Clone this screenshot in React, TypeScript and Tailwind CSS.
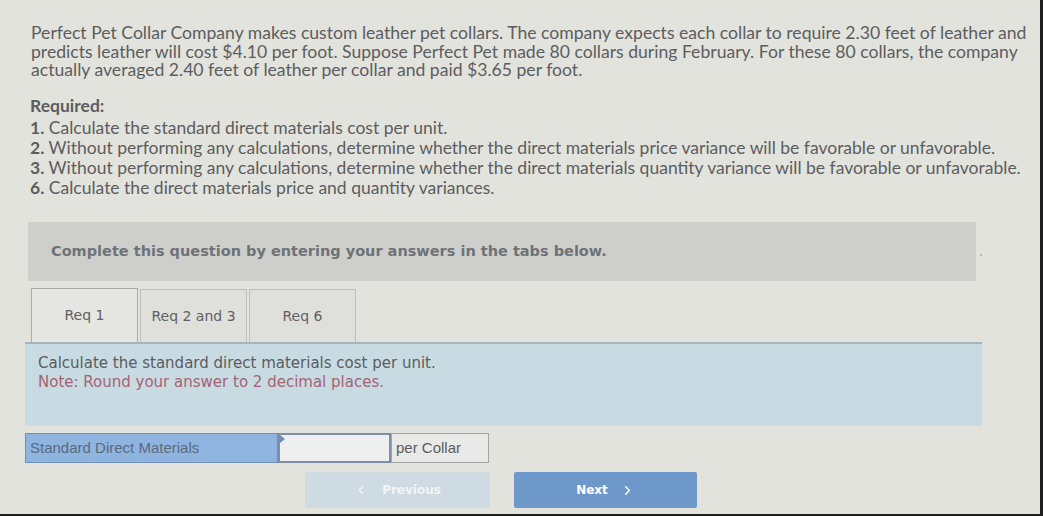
import { ChevronLeft, ChevronRight } from "lucide-react";

const TABS = ["Req 1", "Req 2 and 3", "Req 6"];

const INTRO = [
  "Perfect Pet Collar Company makes custom leather pet collars. The company expects each collar to require 2.30 feet of leather and",
  "predicts leather will cost $4.10 per foot. Suppose Perfect Pet made 80 collars during February. For these 80 collars, the company",
  "actually averaged 2.40 feet of leather per collar and paid $3.65 per foot."
];

const REQUIRED: Array<{ num: string; text: string }> = [
  { num: "1.", text: "Calculate the standard direct materials cost per unit." },
  {
    num: "2.",
    text: "Without performing any calculations, determine whether the direct materials price variance will be favorable or unfavorable."
  },
  {
    num: "3.",
    text: "Without performing any calculations, determine whether the direct materials quantity variance will be favorable or unfavorable."
  },
  { num: "6.", text: "Calculate the direct materials price and quantity variances." }
];

export default function App() {
  return (
    <div className="flex h-[516px] w-[1043px] overflow-hidden bg-[#1f1f1f]">
      <div className="relative flex h-[514px] w-[1040px] flex-col bg-[#e3e3de]">
        <div className="pl-[31px] pr-[4px] pt-[24px] font-['Lato',sans-serif] text-[17.6px] leading-[18.5px] text-[#5c5d5e]">
          {INTRO.map((line) => (
            <div key={line} className="h-[18.5px] whitespace-nowrap">
              {line}
            </div>
          ))}
        </div>

        <div className="mt-[16px] pl-[30px] font-['Lato',sans-serif] text-[17.5px] leading-[19.8px] text-[#5c5d5e]">
          <div className="pb-[3px] font-bold">Required:</div>
          {REQUIRED.map((item) => (
            <div key={item.num} className="whitespace-nowrap">
              <span className="font-bold">{item.num}</span> {item.text}
            </div>
          ))}
        </div>

        <div className="ml-[28px] mt-[25px] flex h-[59px] w-[948px] items-center bg-[#cecfcb] pl-[23px]">
          <span className="font-['DejaVu_Sans',sans-serif] text-[14.5px] font-bold text-[#6d7379]">
            Complete this question by entering your answers in the tabs below.
          </span>
        </div>

        <div className="ml-[31px] mt-[7px] flex items-end gap-[2px]">
          {TABS.map((tab, i) => (
            <div
              key={tab}
              className={
                i === 0
                  ? "flex h-[54px] w-[107px] items-center justify-center border border-b-0 border-[#a9aaa7] bg-[#e6e6e2] font-['DejaVu_Sans',sans-serif] text-[14px] text-[#5f6062]"
                  : "flex h-[53px] w-[107px] items-center justify-center border border-b-0 border-[#bdbebb] bg-[#dfe0dc] font-['DejaVu_Sans',sans-serif] text-[14px] text-[#5f6062]"
              }
            >
              {tab}
            </div>
          ))}
        </div>

        <div className="ml-[25px] h-[84px] w-[957px] border-t-2 border-[#a9b4ba] bg-[#c9dbe2] pl-[13px] pt-[10px] font-['DejaVu_Sans',sans-serif] text-[15px] leading-[19px]">
          <div className="text-[#5a5c61]">Calculate the standard direct materials cost per unit.</div>
          <div className="text-[#a66272]">Note: Round your answer to 2 decimal places.</div>
        </div>

        <div className="ml-[25px] mt-[7px] flex h-[30px] items-stretch font-['Liberation_Sans',sans-serif] text-[15px]">
          <div className="flex w-[253px] items-center border border-[#6d8fbb] bg-[#8fb4e0] pl-[4px] text-[#5a6a7e]">
            Standard Direct Materials
          </div>
          <div className="relative w-[113px] border-2 border-[#7e8fa5] bg-[#eef0ef]">
            <div className="absolute left-0 top-0 h-0 w-0 border-b-[4px] border-l-[5px] border-t-[4px] border-b-transparent border-l-[#6d8fbb] border-t-transparent" />
          </div>
          <div className="flex w-[98px] items-center border border-[#a3a5a6] bg-[#e9eae7] pl-[4px] text-[#5a5c5f]">
            per Collar
          </div>
        </div>

        <div className="mt-[9px] flex items-center">
          <div className="ml-[305px] flex h-[36px] w-[185px] items-center justify-center gap-[14px] rounded-[2px] bg-[#cfdbe2] font-['DejaVu_Sans',sans-serif] text-[12px] font-bold text-[#f2f5f7]">
            <ChevronLeft className="h-[14px] w-[14px]" strokeWidth={2} />
            <span>Previous</span>
          </div>
          <div className="ml-[24px] flex h-[36px] w-[183px] items-center justify-center gap-[12px] rounded-[2px] bg-[#6e98c9] font-['DejaVu_Sans',sans-serif] text-[12px] font-bold text-white">
            <span>Next</span>
            <ChevronRight className="h-[15px] w-[15px]" strokeWidth={2.5} />
          </div>
        </div>

        <div className="absolute left-[980px] top-[254px] h-[2px] w-[2px] rounded-full bg-[#a9aaa7]" />
      </div>
    </div>
  );
}
